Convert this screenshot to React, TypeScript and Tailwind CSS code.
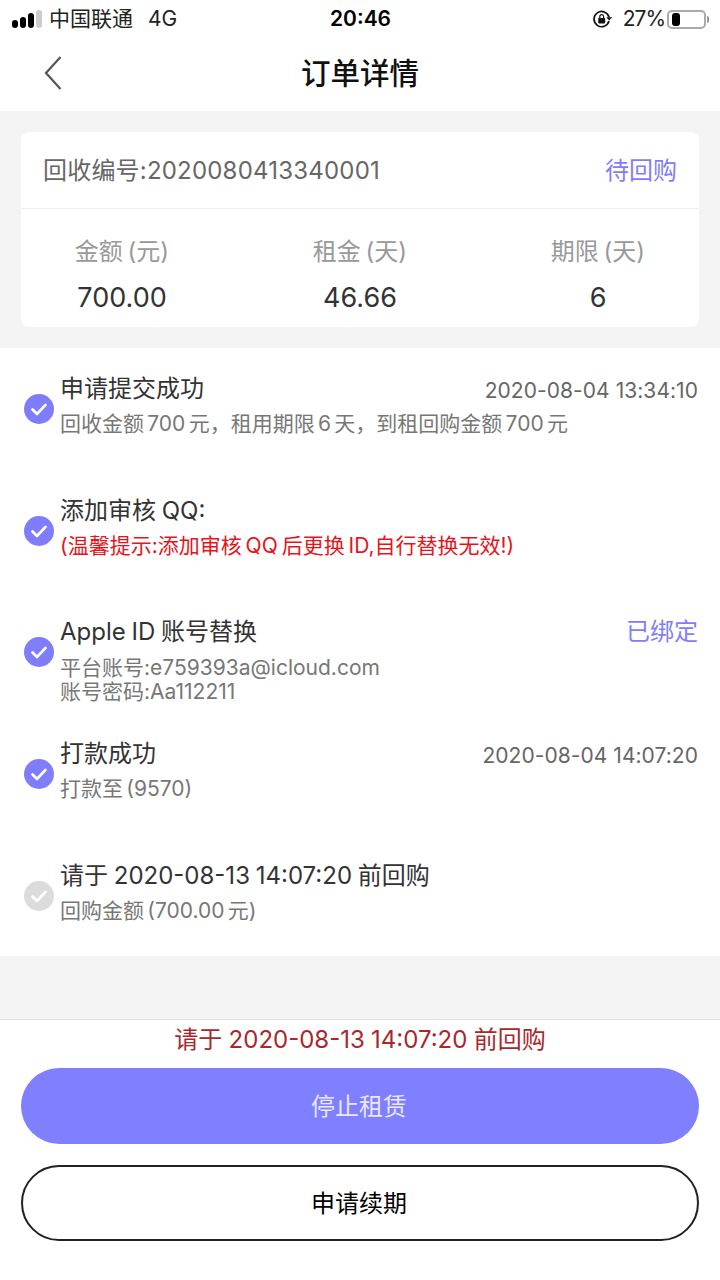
import React from 'react';

const FONT = 'font-["Inter","Noto_Sans_CJK_SC",sans-serif]';

const CheckDot = ({ off }: { off?: boolean }) => (
  <svg width="30" height="30" viewBox="0 0 30 30" className="shrink-0">
    <circle cx="15" cy="15" r="15" fill={off ? '#dcdcdc' : '#7f7dfb'} />
    <path d="M8.5 15.5l4.6 4.4 8.4-9" fill="none" stroke="#fff" strokeWidth="2.8" strokeLinecap="round" strokeLinejoin="round" />
  </svg>
);

const STEPS = [
  { h: 'h-[122px]', subTop: 'mt-[7px]', title: '申请提交成功', sub: ['回收金额 700 元，租用期限 6 天，到租回购金额 700 元'], right: '2020-08-04 13:34:10', rightClass: 'text-[#666] text-[21px] pt-[4px] tracking-[0.05px]' },
  { h: 'h-[121px]', subTop: 'mt-[7px]', title: '添加审核 QQ:', red: '(温馨提示:添加审核 QQ 后更换 ID,自行替换无效!)' },
  { h: 'h-[122px]', subTop: 'mt-[8px]', title: 'Apple ID 账号替换', sub: ['平台账号:e759393a@icloud.com', '账号密码:Aa112211'], right: '已绑定', rightClass: 'text-[#7f7dfb] text-[24px]' },
  { h: 'h-[122px]', subTop: 'mt-[7px]', title: '打款成功', sub: ['打款至 (9570)'], right: '2020-08-04 14:07:20', rightClass: 'text-[#666] text-[21px] pt-[4px] tracking-[0.05px]' },
  { h: 'h-[96px]', subTop: 'mt-[7px]', title: '请于 2020-08-13 14:07:20 前回购', sub: ['回购金额 (700.00 元)'], off: true },
];

const Stats = [
  { label: '金额 (元)', value: '700.00' },
  { label: '租金 (天)', value: '46.66' },
  { label: '期限 (天)', value: '6' },
];

export default function App() {
  return (
    <div className={`${FONT} w-[720px] h-[1280px] bg-white flex flex-col overflow-hidden text-[#333]`}>
      {/* status bar */}
      <div className="h-[38px] pl-3 pr-[11px] flex items-center justify-between text-[21px] text-[#222] relative">
        <div className="flex items-center gap-[7px]">
          <div className="flex items-end gap-[2px] h-[18px]">
            <div className="w-[6px] h-[8px] rounded-sm bg-black" />
            <div className="w-[6px] h-[11px] rounded-sm bg-black" />
            <div className="w-[6px] h-[15px] rounded-sm bg-black" />
            <div className="w-[6px] h-[18px] rounded-sm bg-[#ccc]" />
          </div>
          <span>中国联通</span>
          <span className="ml-[8px]">4G</span>
        </div>
        <div className="absolute left-[330px] top-[4px] font-semibold text-[21px] text-black leading-[30px]">20:46</div>
        <div className="flex items-center gap-[1px]">
          <svg width="20" height="18" viewBox="0 0 20 18" className="mr-[9px]">
            <path d="M16 7.2A7.6 7.6 0 1 0 16 11" fill="none" stroke="#111" strokeWidth="1.7" />
            <path d="M13.2 7.2h6l-3 3.4z" fill="#111" />
            <rect x="5.2" y="8" width="7" height="5.4" rx="0.8" fill="#111" />
            <path d="M6.8 8V6.6a1.9 1.9 0 0 1 3.8 0V8" fill="none" stroke="#111" strokeWidth="1.2" />
          </svg>
          <span className="tracking-[-1px]">27%</span>
          <div className="ml-[1px] w-[39px] h-[19px] rounded-[5px] border-2 border-[#aaa] px-[3px] py-[1px]">
            <div className="w-[8px] h-full rounded-[3px] bg-black" />
          </div>
          <div className="w-[2px] h-[7px] bg-[#999] rounded-r-sm" />
        </div>
      </div>

      {/* nav */}
      <div className="h-[73px] pb-[2px] relative flex items-center justify-center">
        <svg width="20" height="36" viewBox="0 0 20 36" className="absolute left-[43px] top-[17px]">
          <path d="M17.5 2L3 18l14.5 16" fill="none" stroke="#555" strokeWidth="2.2" />
        </svg>
        <span className="text-[29.5px] font-medium text-[#111]">订单详情</span>
      </div>

      {/* order summary */}
      <div className="bg-[#f4f4f4] h-[237px] pt-[21px] px-[21px]">
        <div className="bg-white rounded-lg h-[195px]">
          <div className="h-[77px] pt-[2px] px-[22px] flex items-center justify-between border-b border-[#eee] text-[24px]">
            <span className="text-[#666] tracking-[0.2px]">回收编号:2020080413340001</span>
            <span className="text-[#7f7dfb]">待回购</span>
          </div>
          <div className="flex justify-between pt-[25px]">
            {Stats.map((s) => (
              <div key={s.label} className="w-[202px] flex flex-col items-center">
                <span className="text-[24px] leading-[36px] text-[#999] [word-spacing:-2px]">{s.label}</span>
                <span className="text-[27px] leading-[36px] mt-[10px] text-[#333]">{s.value}</span>
              </div>
            ))}
          </div>
        </div>
      </div>

      {/* steps */}
      <div className="h-[608px] pt-[25px]">
        {STEPS.map((s) => (
          <div key={s.title} className={`${s.h} flex pl-[24px] pr-[22px]`}>
            <div className="mt-[21px] mr-[6px]">
              <CheckDot off={s.off} />
            </div>
            <div className="flex-1">
              <div className="flex items-center justify-between h-[32px]">
                <span className="text-[24px] leading-[32px] text-[#333] [word-spacing:-1px]">{s.title}</span>
                {s.right && <span className={s.rightClass}>{s.right}</span>}
              </div>
              <div className={s.subTop}>
                {s.red && <div className="text-[21px] leading-[24px] text-[#e8131a] [word-spacing:-2px]">{s.red}</div>}
                {s.sub?.map((t) => (
                  <div key={t} className="text-[21px] leading-[24px] text-[#777] [word-spacing:-2.6px]">{t}</div>
                ))}
              </div>
            </div>
          </div>
        ))}
      </div>

      <div className="h-[64px] bg-[#f4f4f4] border-b border-[#ddd]" />

      {/* footer */}
      <div className="flex-1 flex flex-col px-[21px]">
        <div className="h-[48px] pb-2 flex items-center justify-center text-[24px] text-[#a8282d] [word-spacing:-0.5px]">请于 2020-08-13 14:07:20 前回购</div>
        <button className="h-[76px] pt-[2px] pr-[2px] rounded-full bg-[#7f7fff] text-[24px] text-[#e8e8ff]">停止租赁</button>
        <button className="h-[76px] pt-[2px] pr-[2px] mt-[21px] rounded-full border-2 border-[#222] text-[24px] text-black">申请续期</button>
      </div>
    </div>
  );
}
